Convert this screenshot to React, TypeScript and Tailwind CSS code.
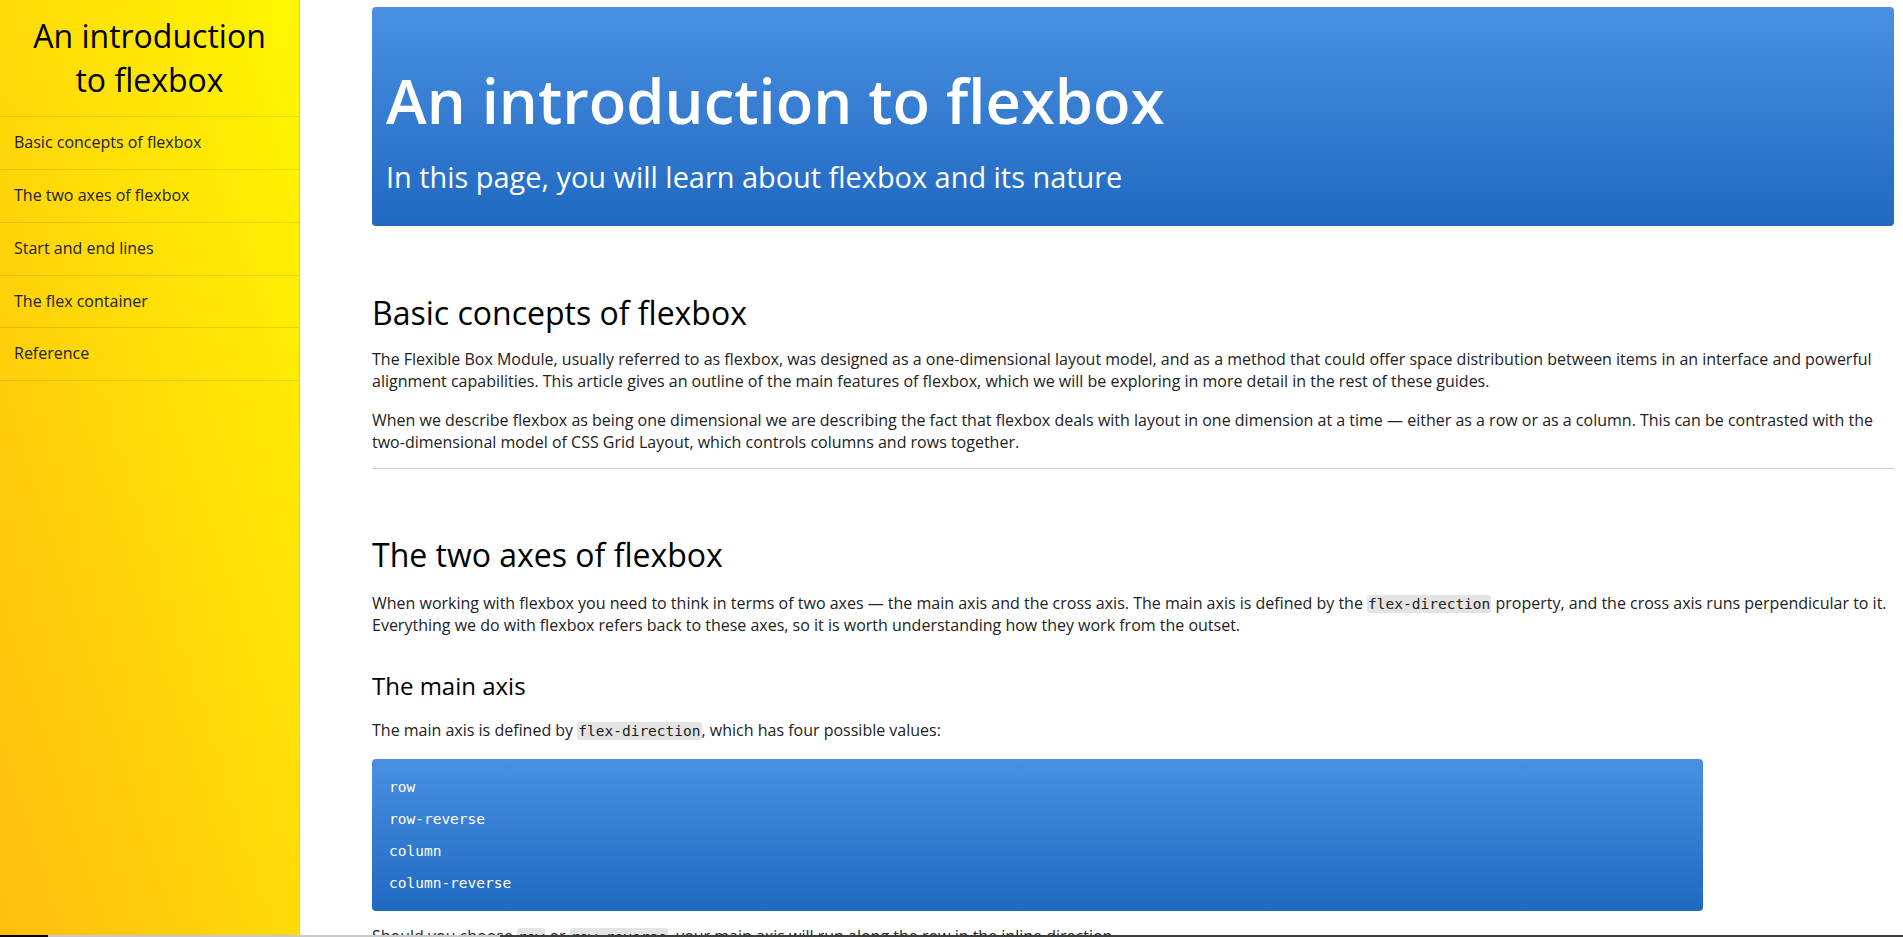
const nav = [
  'Basic concepts of flexbox',
  'The two axes of flexbox',
  'Start and end lines',
  'The flex container',
  'Reference',
]

const values = ['row', 'row-reverse', 'column', 'column-reverse']

function Code({ children }: { children: string }) {
  return (
    <code className="rounded-[3px] bg-[#e4e4e4] px-px py-px font-['DejaVu_Sans_Mono',monospace] text-[14.5px] leading-none">
      {children}
    </code>
  )
}

function Sidebar() {
  return (
    <aside className="h-screen w-[300px] shrink-0 border-r border-[#e8c640] bg-gradient-to-tr from-[#ffbd0e] to-[#fff700]">
      <h1 className="px-4 pb-[15px] pt-[14px] text-center text-[32px] leading-[1.362] text-black">
        An introduction to flexbox
      </h1>
      <ul className="border-t border-black/10">
        {nav.map((item) => (
          <li key={item} className="border-b border-black/10 px-[14px] py-[15px] text-[16px] leading-[1.362] text-[#222]">
            {item}
          </li>
        ))}
      </ul>
    </aside>
  )
}

export default function App() {
  return (
    <div className="flex h-screen overflow-hidden bg-white font-['Open_Sans',sans-serif] text-[#222]">
      <Sidebar />
      <main className="min-w-0 flex-1 overflow-hidden pl-[72px] pr-[9px] pt-[7px]">
        <header className="rounded bg-gradient-to-b from-[#4a90e2] to-[#1f69c1] px-[14px] pb-[30px] pt-[52px] text-white">
          <h1 className="text-[61.5px] font-semibold leading-[1.362]">An introduction to flexbox</h1>
          <p className="mt-[14px] text-[28.9px] leading-[1.362]">In this page, you will learn about flexbox and its nature</p>
        </header>

        <section className="text-[16px] leading-[1.362]">
          <h2 className="mt-[64.6px] text-[32px] leading-[1.362] text-black">Basic concepts of flexbox</h2>
          <p className="mt-[15px]">
            The Flexible Box Module, usually referred to as flexbox, was designed as a one-dimensional layout model, and as a method that could offer space distribution between items in an interface and powerful alignment capabilities. This article gives an outline of the main features of flexbox, which we will be exploring in more detail in the rest of these guides.
          </p>
          <p className="mt-[17px]">
            When we describe flexbox as being one dimensional we are describing the fact that flexbox deals with layout in one dimension at a time — either as a row or as a column. This can be contrasted with the two-dimensional model of CSS Grid Layout, which controls columns and rows together.
          </p>
          <hr className="mt-[15px] border-t border-[#cccccc]" />
        </section>

        <section className="text-[16px] leading-[1.362]">
          <h2 className="mt-[64px] text-[32px] leading-[1.362] text-black">The two axes of flexbox</h2>
          <p className="mt-[16px]">
            When working with flexbox you need to think in terms of two axes — the main axis and the cross axis. The main axis is defined by the <Code>flex-direction</Code> property, and the cross axis runs perpendicular to it. Everything we do with flexbox refers back to these axes, so it is worth understanding how they work from the outset.
          </p>
          <h3 className="mt-[33px] text-[24px] leading-[1.362] text-black">The main axis</h3>
          <p className="mt-[17.5px]">
            The main axis is defined by <Code>flex-direction</Code>, which has four possible values:
          </p>
          <pre className="mt-[17px] w-[1331px] rounded bg-gradient-to-b from-[#4a90e2] to-[#1f69c1] px-[17px] py-3 font-['DejaVu_Sans_Mono',monospace] text-[14.5px] leading-[32px] text-white">
            {values.map((v) => (
              <div key={v}>{v}</div>
            ))}
          </pre>
          <p className="mt-[15px]">
            Should you choose <Code>row</Code> or <Code>row-reverse</Code>, your main axis will run along the row in the inline direction.
          </p>
        </section>
      </main>

      <div className="pointer-events-none fixed bottom-0 left-0 flex h-[2px] w-full">
        <div className="w-[48px] bg-black" />
        <div className="w-[452px] bg-[#c8c8c8]" />
        <div className="flex-1 bg-[#3c3c3c]" />
      </div>
    </div>
  )
}
